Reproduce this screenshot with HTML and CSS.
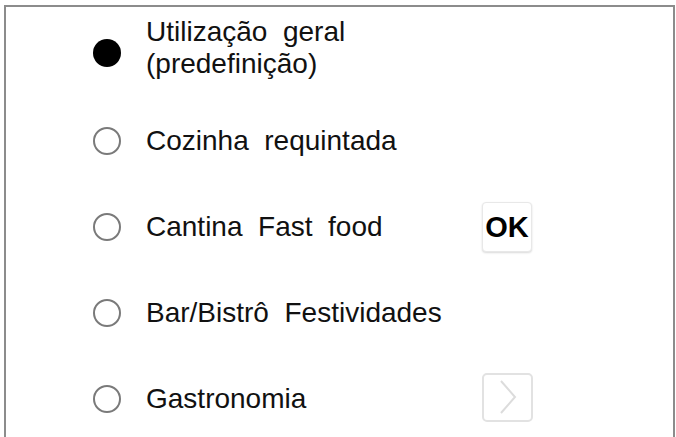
FILE: index.html
```html
<!DOCTYPE html>
<html lang="pt">
<head>
    <meta charset="UTF-8">
    <title>Modo de utilização</title>
    <link rel="stylesheet" href="styles.css">
</head>
<body>
    <div class="panel">
        <div class="option multi">
            <span class="radio checked"></span>
            <span class="label">Utilização&nbsp; geral<br>(predefinição)</span>
        </div>
        <div class="option">
            <span class="radio"></span>
            <span class="label">Cozinha&nbsp; requintada</span>
        </div>
        <div class="option">
            <span class="radio"></span>
            <span class="label">Cantina&nbsp; Fast&nbsp; food</span>
            <button class="btn-ok">OK</button>
        </div>
        <div class="option">
            <span class="radio"></span>
            <span class="label">Bar/Bistrô&nbsp; Festividades</span>
        </div>
        <div class="option">
            <span class="radio"></span>
            <span class="label">Gastronomia</span>
            <button class="btn-next">
                <svg width="20" height="36" viewBox="0 0 20 36">
                    <polyline points="3,2 17,18 3,34" fill="none" stroke="#dcdcdc" stroke-width="2"/>
                </svg>
            </button>
        </div>
    </div>
</body>
</html>
```

FILE: styles.css
```css
body {
    margin: 0;
    font-family: "Liberation Sans", Arial, sans-serif;
    color: #111;
    background: #fff;
}

.panel {
    margin: 5px 1px 0 4px;
    height: 429px;
    border: 2px solid #8c8c8c;
    border-bottom: 1px solid #dedede;
    padding-top: 5px;
    overflow: hidden;
}

.option {
    display: flex;
    align-items: center;
    height: 86px;
    padding-left: 87px;
}

.option.multi {
    align-items: flex-start;
    padding-top: 4px;
    height: 82px;
}

.radio {
    width: 28px;
    height: 28px;
    box-sizing: border-box;
    border: 2px solid #7a7a7a;
    border-radius: 50%;
    flex-shrink: 0;
}

.radio.checked {
    border: none;
    background: #000;
    margin-top: 23px;
}

.label {
    width: 336px;
    margin-left: 25px;
    font-size: 28px;
    line-height: 32px;
    flex-shrink: 0;
}

button {
    font-family: inherit;
    background: #fff;
    padding: 0;
    cursor: pointer;
}

.btn-ok {
    width: 50px;
    height: 50px;
    border: 1px solid #e8e8e8;
    border-radius: 4px;
    box-shadow: 0 1px 2px rgba(0, 0, 0, 0.15);
    font-size: 29px;
    font-weight: bold;
    color: #000;
}

.btn-next {
    width: 51px;
    height: 49px;
    border: 2px solid #e2e2e2;
    border-radius: 5px;
    display: flex;
    align-items: center;
    justify-content: center;
    margin-top: -4px;
}
```
